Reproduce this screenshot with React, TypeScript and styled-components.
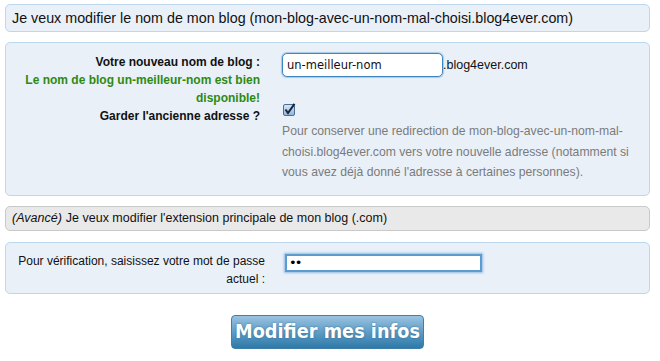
import React, { useState } from 'react';
import styled, { createGlobalStyle } from 'styled-components';

const palette = {
  panelBg: '#e9f0f8',
  panelBorder: '#bcd7ee',
  greyBg: '#e9e9e9',
  greyBorder: '#c9c9c9',
  text: '#111111',
  green: '#2e8a12',
  muted: '#7b7b7b',
  focus: '#5b9bd0',
};

const GlobalStyle = createGlobalStyle`
  html, body {
    margin: 0;
    padding: 0;
    background: #ffffff;
  }
  body {
    font-family: 'Liberation Sans', Arial, Helvetica, sans-serif;
    font-size: 12px;
    color: ${palette.text};
  }
`;

const Page = styled.div`
  width: 645px;
  padding: 4px 0 0 5px;
  display: flex;
  flex-direction: column;
`;

const Panel = styled.div<{ $grey?: boolean }>`
  box-sizing: border-box;
  background: ${(p) => (p.$grey ? palette.greyBg : palette.panelBg)};
  border: 1px solid ${(p) => (p.$grey ? palette.greyBorder : palette.panelBorder)};
  border-radius: 5px;
`;

const TitleBar = styled(Panel)`
  height: 28px;
  padding: 0 6px;
  display: flex;
  align-items: center;
  font-size: 14.3px;
`;

const FormPanel = styled(Panel)`
  margin-top: 10px;
  padding: 10px 2px 12px 10px;
  display: grid;
  grid-template-columns: 244px 1fr;
  column-gap: 22px;
`;

const AdvancedBar = styled(Panel)`
  margin-top: 10px;
  height: 25px;
  padding: 0 6px;
  display: flex;
  align-items: center;
  font-size: 12.5px;

  em {
    margin-right: 4px;
  }
`;

const PasswordPanel = styled(Panel)`
  margin-top: 11px;
  height: 52px;
  padding: 9px 10px 0;
  display: grid;
  grid-template-columns: 249px 1fr;
  column-gap: 20px;
  align-items: start;
`;

const Label = styled.div<{ $bold?: boolean }>`
  text-align: right;
  line-height: 18px;
  font-weight: ${(p) => (p.$bold ? 'bold' : 'normal')};
`;

const Available = styled.div`
  color: ${palette.green};
  font-weight: bold;
`;

const Field = styled.div`
  display: flex;
  align-items: center;
  height: 24px;
`;

const NameInput = styled.input`
  box-sizing: border-box;
  width: 161px;
  height: 24px;
  padding: 0 4px;
  border: 1px solid #3f86bd;
  border-radius: 5px;
  box-shadow: 0 0 1px 1px rgba(91, 155, 208, 0.45);
  background: #fff;
  font-family: 'DejaVu Sans', Verdana, sans-serif;
  font-size: 11.5px;
  color: #111;
  outline: none;
`;

const Suffix = styled.span`
  font-size: 12.5px;
`;

const Options = styled.div`
  display: flex;
  flex-direction: column;
`;

const Check = styled.span`
  display: block;
  width: 13px;
  height: 13px;
  margin: -4px 0 0 1px;
`;

const Hint = styled.p`
  margin: 5px 0 0;
  color: ${palette.muted};
  font-size: 12.2px;
  line-height: 20.5px;
`;

const PasswordInput = styled.input`
  box-sizing: border-box;
  width: 197px;
  height: 18px;
  margin-top: 2px;
  padding: 0 2px;
  border: 2px solid ${palette.focus};
  box-shadow: 0 0 2px 1px rgba(91, 155, 208, 0.6);
  background: #fff;
  font-family: 'DejaVu Sans', sans-serif;
  font-size: 13px;
  letter-spacing: -2px;
  outline: none;
`;

const Actions = styled.div`
  display: flex;
  justify-content: center;
  margin-top: 21px;
`;

const SubmitButton = styled.button`
  height: 34px;
  padding: 0 3px;
  border: 1px solid #3f7fa8;
  border-radius: 4px;
  background: linear-gradient(#9ac3e0, #5f9dc6 50%, #2d79a8);
  color: #fff;
  font-family: 'DejaVu Sans Condensed', 'DejaVu Sans', Verdana, sans-serif;
  font-stretch: condensed;
  font-weight: bold;
  font-size: 19.7px;
  text-shadow: 0 0 2px rgba(0, 50, 90, 0.5);
  cursor: pointer;
`;

const CheckIcon = () => (
  <svg width="13" height="13" viewBox="0 0 13 13">
    <defs>
      <linearGradient id="cb" x1="0" y1="0" x2="0" y2="1">
        <stop offset="0" stopColor="#d8e8f8" />
        <stop offset="1" stopColor="#8fb4dc" />
      </linearGradient>
    </defs>
    <rect x="0.5" y="1.5" width="11" height="11" rx="1.5" fill="url(#cb)" stroke="#4b6f98" />
    <path d="M2.5 6.5 L5 10 L11.5 0.8" fill="none" stroke="#1b2638" strokeWidth="2" />
  </svg>
);

const App: React.FC = () => {
  const [name, setName] = useState('un-meilleur-nom');
  const [password, setPassword] = useState('ab');

  return (
    <Page>
      <GlobalStyle />
      <TitleBar>
        Je veux modifier le nom de mon blog (mon-blog-avec-un-nom-mal-choisi.blog4ever.com)
      </TitleBar>

      <FormPanel>
        <Label $bold>
          Votre nouveau nom de blog :
          <Available>Le nom de blog un-meilleur-nom est bien disponible!</Available>
        </Label>
        <Field>
          <NameInput value={name} onChange={(e) => setName(e.target.value)} />
          <Suffix>.blog4ever.com</Suffix>
        </Field>

        <Label $bold>Garder l'ancienne adresse ?</Label>
        <Options>
          <Check>
            <CheckIcon />
          </Check>
          <Hint>
            Pour conserver une redirection de mon-blog-avec-un-nom-mal-choisi.blog4ever.com vers
            votre nouvelle adresse (notamment si vous avez déjà donné l'adresse à certaines
            personnes).
          </Hint>
        </Options>
      </FormPanel>

      <AdvancedBar $grey>
        <em>(Avancé)</em> Je veux modifier l'extension principale de mon blog (.com)
      </AdvancedBar>

      <PasswordPanel>
        <Label>Pour vérification, saisissez votre mot de passe actuel :</Label>
        <PasswordInput
          type="password"
          value={password}
          onChange={(e) => setPassword(e.target.value)}
        />
      </PasswordPanel>

      <Actions>
        <SubmitButton>Modifier mes infos</SubmitButton>
      </Actions>
    </Page>
  );
};

export default App;
